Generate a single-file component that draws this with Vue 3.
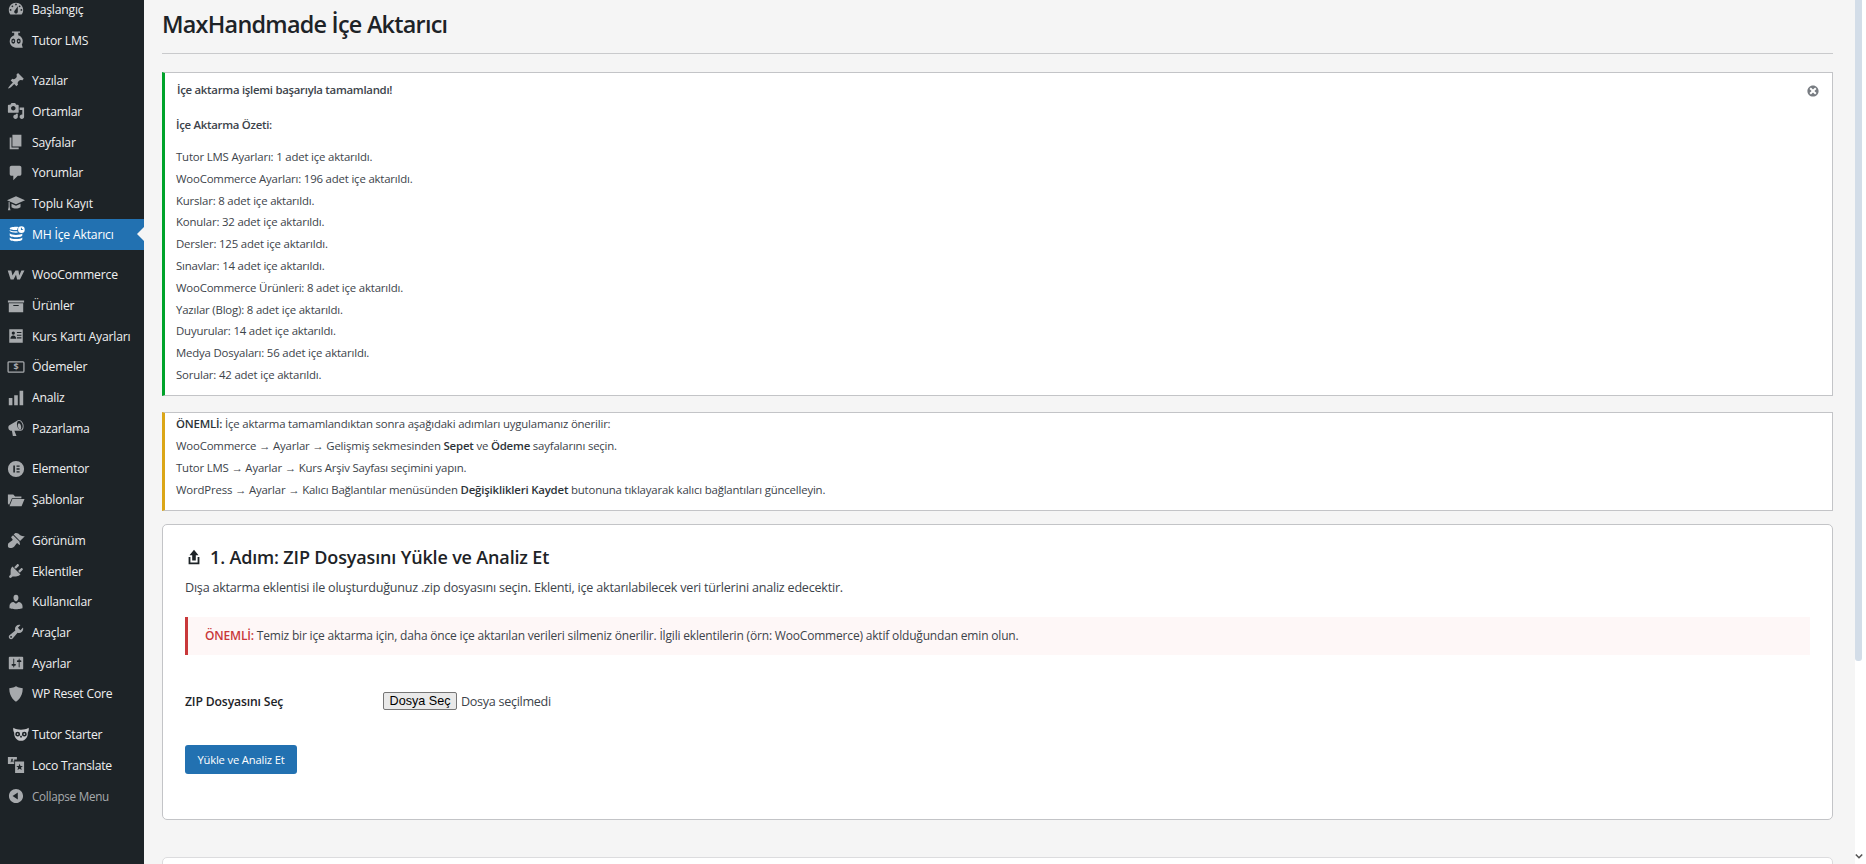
<script setup>
const menuGroups = [
  [
    { label: 'Başlangıç', icon: 'dashboard' },
    { label: 'Tutor LMS', icon: 'tutor' }
  ],
  [
    { label: 'Yazılar', icon: 'pin' },
    { label: 'Ortamlar', icon: 'media' },
    { label: 'Sayfalar', icon: 'page' },
    { label: 'Yorumlar', icon: 'comments' },
    { label: 'Toplu Kayıt', icon: 'learn' },
    { label: 'MH İçe Aktarıcı', icon: 'database', active: true }
  ],
  [
    { label: 'WooCommerce', icon: 'woo' },
    { label: 'Ürünler', icon: 'archive' },
    { label: 'Kurs Kartı Ayarları', icon: 'card' },
    { label: 'Ödemeler', icon: 'payments' },
    { label: 'Analiz', icon: 'chart' },
    { label: 'Pazarlama', icon: 'megaphone' }
  ],
  [
    { label: 'Elementor', icon: 'elementor' },
    { label: 'Şablonlar', icon: 'folder' }
  ],
  [
    { label: 'Görünüm', icon: 'brush' },
    { label: 'Eklentiler', icon: 'plugin' },
    { label: 'Kullanıcılar', icon: 'users' },
    { label: 'Araçlar', icon: 'tools' },
    { label: 'Ayarlar', icon: 'settings' },
    { label: 'WP Reset Core', icon: 'shield' }
  ],
  [
    { label: 'Tutor Starter', icon: 'owl' },
    { label: 'Loco Translate', icon: 'loco' },
    { label: 'Collapse Menu', icon: 'collapse', muted: true }
  ]
]

const icons = {
  dashboard: 'M3.76 16h12.48c1.1-1.37 1.76-3.11 1.76-5 0-4.42-3.58-8-8-8s-8 3.58-8 8c0 1.89.66 3.63 1.76 5zM10 4c.55 0 1 .45 1 1s-.45 1-1 1-1-.45-1-1 .45-1 1-1zM6 6c.55 0 1 .45 1 1s-.45 1-1 1-1-.45-1-1 .45-1 1-1zm8 0c.55 0 1 .45 1 1s-.45 1-1 1-1-.45-1-1 .45-1 1-1zm-5.37 5.55L12 7v6c0 1.1-.9 2-2 2s-2-.9-2-2c0-.57.24-1.08.63-1.45zM4 10c.55 0 1 .45 1 1s-.45 1-1 1-1-.45-1-1 .45-1 1-1zm12 0c.55 0 1 .45 1 1s-.45 1-1 1-1-.45-1-1 .45-1 1-1z',
  tutor: 'M5.500.5h9V2h-2v2.600c3 .9 5 3.400 5 6.400 0 1.500-.4 2.800-1 3.900l1 3.600H10c-3.900 0-7-3.100-7-7 0-3.200 2-5.800 5-6.700V2H5.500zM7 8.200a2.200 3 0 100 6 2.200 3 0 000-6zm6 0a2.200 3 0 100 6 2.200 3 0 000-6zM7 10.200a1 1 0 110 2 1 1 0 010-2zm6 0a1 1 0 110 2 1 1 0 010-2z',
  pin: 'M10.44 3.02l1.82-1.82 6.36 6.35-1.83 1.82c-1.05-.68-2.48-.57-3.41.36l-.75.75c-.92.93-1.04 2.35-.35 3.41l-1.83 1.82-2.41-2.41-2.8 2.79c-.42.42-3.38 2.71-3.8 2.29s1.86-3.39 2.28-3.81l2.79-2.79L4.1 9.36l1.83-1.82c1.05.69 2.48.57 3.4-.36l.75-.75c.93-.92 1.05-2.35.36-3.41z',
  media: 'M13 11V4c0-.55-.45-1-1-1h-1.67L9 1H5L3.67 3H2c-.55 0-1 .45-1 1v7c0 .55.45 1 1 1h10c.55 0 1-.45 1-1zM7 4.500c1.380 0 2.500 1.120 2.500 2.500S8.380 9.500 7 9.500 4.500 8.380 4.500 7 5.620 4.500 7 4.500zM14 6h5v10.500c0 1.380-1.120 2.500-2.500 2.500S14 17.880 14 16.500s1.120-2.500 2.500-2.500c.17 0 .34.02.5.05V9h-3V6zm-4 8.050V13h2v3.500c0 1.380-1.120 2.500-2.500 2.500S7 17.880 7 16.500 8.120 14 9.500 14c.17 0 .34.02.5.05z',
  page: 'M6 15V2h10v13H6zm-1 1h8v2H3V5h2v11z',
  comments: 'M5 2h9c1.100 0 2 .9 2 2v7c0 1.100-.9 2-2 2h-2l-5 5v-5H5c-1.100 0-2-.9-2-2V4c0-1.100.9-2 2-2z',
  learn: 'M10 2.500L0 7l10 4.500L20 7zM5 10.800v3.900c2.500 2 7.500 2 10 0v-3.900l-5 2.300zM1.800 8.700l1.200.5v5.300l.9 3.500H1l.8-3.500z',
  database: 'M10 2c1 0 2 .1 2.900.3a5 5 0 00-1.600 3.200C7.600 5.800 3 5.200 3 3.800 3 2.800 6.100 2 10 2zm-7 3.600C4 6.800 7.200 7.200 11.400 7a5 5 0 00.8 1.400c-.7.1-1.400.1-2.200.1-3 0-6.100-.5-7-1.700zM3 9.300c1 1.200 4 1.700 7 1.700 2.900 0 5.900-.5 7-1.600v1.900c0 1.400-3.100 2.200-7 2.200s-7-.8-7-2.200zM3 13.800C4 15 7 15.500 10 15.500s6-.5 7-1.700v2c0 1.400-3.100 2.200-7 2.200s-7-.8-7-2.200zM16 1.500a3.700 3.700 0 110 7.400 3.700 3.700 0 010-7.400zm-.5 1.500v2.600h2.400v-.9h-1.400V3z',
  woo: 'M.8 5h4l1.300 5.500L9.400 5h3.300l.9 5.500L16 5h3.400l-5 10h-3.200L10 9.800 7.300 15H4z',
  archive: 'M19 4v2H1V4h18zM2 7h16v10H2V7zm11 3V9H7v1h6z',
  card: 'M2.500 2.500h15v15h-15zm8.500 3v1.200h5V5.500zm0 3v1.200h5V8.500zm0 3v1.200h5v-1.200zM7 5a1.800 1.800 0 100 3.600A1.800 1.800 0 007 5zM3.800 13h6.400c0-2-1.300-3.500-3.200-3.500S3.800 11 3.800 13z',
  chart: 'M18 18V2h-4v16h4zm-6 0V7H8v11h4zm-6 0v-8H2v8h4z',
  megaphone: 'M18.150 5.940c.46 1.620.38 3.220-.02 4.480-.42 1.280-1.260 2.180-2.300 2.480-.16.06-.26.06-.4.06-.06.02-.12.02-.18.02-.06.02-.14.02-.22.02h-6.800l2.220 5.500c.02.14-.06.26-.14.34-.08.1-.24.16-.34.16H6.950c-.1 0-.26-.06-.34-.16-.08-.08-.16-.2-.14-.34l-1-5.500H4.250l-.02-.02c-.5.06-1.080-.18-1.540-.62s-.88-1.080-1.060-1.880c-.24-.8-.2-1.560-.02-2.200.18-.62.58-1.080 1.060-1.300l.02-.02 9-5.400c.1-.06.18-.1.24-.16.06-.04.14-.08.24-.12.16-.08.28-.12.5-.18 1.040-.3 2.240.1 3.220 1 .98.88 1.800 2.240 2.260 3.860zm-2.580 5.980h-.02c.4-.1.74-.34 1.040-.7.58-.7.86-1.760.86-3.040 0-.64-.1-1.300-.28-1.980-.34-1.360-1.020-2.500-1.780-3.240s-1.680-1.100-2.460-.88c-.82.22-1.400.96-1.700 2-.32 1.040-.28 2.360.06 3.720.38 1.360 1 2.500 1.800 3.240.78.74 1.620 1.100 2.480.88zm-2.540-7.080c.22-.04.42-.02.62.04.38.16.76.48 1.100 1s.62 1.200.8 1.940c.2.74.26 1.440.2 2.060-.06.6-.2 1.080-.46 1.400-.14.16-.3.3-.52.36-.22.06-.44.04-.64-.02-.36-.14-.74-.48-1.060-1-.34-.52-.62-1.200-.82-1.940-.4-1.500-.32-2.900.36-3.500.1-.12.26-.26.42-.34z',
  elementor: 'M10 1a9 9 0 100 18 9 9 0 000-18zM7 6h1.800v8H7zm3.600 0H14v1.600h-3.400zm0 3.200H14v1.600h-3.400zm0 3.200H14V14h-3.400z',
  folder: 'M1 4h6l2 2h7v2H5.500L2.300 15.500 1 14zM6 9h13.500l-3.300 8H2.800z',
  brush: 'M14.480 11.060L7.410 3.990l1.500-1.500c.5-.56 2.300-.47 3.510.32 1.210.8 1.430 1.280 2.910 2.100 1.180.64 2.450 1.260 4.450.85zm-.71.71L6.700 4.700 4.930 6.470c-.39.39-.39 1.020 0 1.410l1.060 1.060c.39.39.39 1.030 0 1.420-.6.6-1.430 1.110-2.210 1.690-.35.26-.7.53-1.010.84C1.430 13.230 1 14.490 1 16.500 1 17.550 1.450 19 3.500 19c2.010 0 3.270-.43 4.610-1.770.31-.31.58-.66.84-1.010.58-.78 1.090-1.610 1.690-2.210.39-.39 1.030-.39 1.420 0l1.060 1.060c.39.39 1.020.39 1.410 0z',
  plugin: 'M13.110 4.360L9.870 7.600 8 5.730l3.240-3.240c.35-.34 1.050-.2 1.560.32.52.51.66 1.210.31 1.550zm-8 1.770l.91-1.120 9.010 9.010-1.190.84c-.71.71-2.630 1.160-3.820 1.160H6.140L4.900 17.260c-.59.59-1.540.59-2.120 0-.59-.58-.59-1.530 0-2.120l1.240-1.240v-3.880c0-1.130.4-3.190 1.090-3.890zm7.260 3.970l3.240-3.240c.34-.35 1.040-.21 1.550.31.52.51.66 1.210.31 1.550l-3.240 3.250z',
  users: 'M10 9.250c-2.270 0-2.730-3.440-2.730-3.440C7 4.020 7.820 2 9.970 2c2.160 0 2.980 2.020 2.710 3.810 0 0-.41 3.440-2.680 3.440zm0 2.570L12.720 10c2.390 0 4.520 2.330 4.520 4.530v2.490s-3.650 1.130-7.240 1.130c-3.650 0-7.240-1.130-7.240-1.130v-2.490c0-2.250 1.940-4.480 4.470-4.480z',
  tools: 'M16.680 9.770c-1.340 1.340-3.300 1.670-4.950.99l-5.410 6.520c-.99.99-2.590.99-3.580 0s-.99-2.590 0-3.570l6.520-5.420c-.68-1.650-.35-3.610.99-4.950 1.280-1.280 3.120-1.620 4.720-1.060l-2.890 2.890 2.820 2.820 2.860-2.870c.53 1.580.18 3.390-1.080 4.650zM3.810 16.210c.4.39 1.040.39 1.430 0 .4-.4.4-1.040 0-1.430-.39-.4-1.030-.4-1.430 0-.39.39-.39 1.030 0 1.430z',
  settings: 'M18 16V4c0-.55-.45-1-1-1H3c-.55 0-1 .45-1 1v12c0 .55.45 1 1 1h14c.55 0 1-.45 1-1zM8 11h1c.55 0 1 .45 1 1s-.45 1-1 1H8v1.500c0 .28-.22.5-.5.5s-.5-.22-.5-.5V13H6c-.55 0-1-.45-1-1s.45-1 1-1h1V5.500c0-.28.22-.5.5-.5s.5.22.5.5V11zm5-2h-1c-.55 0-1-.45-1-1s.45-1 1-1h1V5.500c0-.28.22-.5.5-.5s.5.22.5.5V7h1c.55 0 1 .45 1 1s-.45 1-1 1h-1v5.500c0 .28-.22.5-.5.5s-.5-.22-.5-.5V9z',
  shield: 'M10 1.500s3.200 2 7.500 2c0 11-7.500 15-7.500 15S2.500 14.500 2.500 3.500c4.300 0 7.500-2 7.500-2z',
  owl: 'M1.500 3c2.500 1.500 5.500 2.200 8.500 2.200s6-.7 8.500-2.200c.5 2.500-.2 4.500-1 5.500.5 4.500-2.500 9-7.500 9s-8-4.500-7.500-9c-.8-1-1.500-3-1-5.500zM6.300 7.500a2.700 2.700 0 100 5.400 2.700 2.700 0 000-5.400zm7.400 0a2.700 2.700 0 100 5.400 2.700 2.700 0 000-5.400zM6.300 9.300a.9.9 0 110 1.800.9.9 0 010-1.800zm7.400 0a.9.9 0 110 1.800.9.9 0 010-1.800zM10 11.500l-1.200 1.500L10 14.500l1.200-1.500z',
  loco: 'M1 1h10v3H8v5H1zm3 6l1-4h1.300l1 4H6.600l-.2-.9H5l-.2.9zm1.200-1.800h1l-.5-1.300zM9 6h10v13H9zm5 2.500l-1 2.500-2.700.2 2.100 1.700-.7 2.600 2.300-1.400 2.300 1.400-.7-2.600 2.100-1.700L15 11z',
  collapse: 'M10 2.160c4.330 0 7.840 3.510 7.840 7.840s-3.510 7.840-7.840 7.840S2.160 14.330 2.160 10 5.710 2.160 10 2.160zm2 11.720V6.120L6.180 9.970z'
}

const dismissPath = 'M10 2c4.420 0 8 3.580 8 8s-3.580 8-8 8-8-3.580-8-8 3.580-8 8-8zm5 11l-3-3 3-3-2-2-3 3-3-3-2 2 3 3-3 3 2 2 3-3 3 3z'
const uploadPath = 'M8 14V8H5l5-6 5 6h-3v6H8zm-2 2v-6H4v8h12.010v-8H14v6H6z'

const summary = [
  'Tutor LMS Ayarları: 1 adet içe aktarıldı.',
  'WooCommerce Ayarları: 196 adet içe aktarıldı.',
  'Kurslar: 8 adet içe aktarıldı.',
  'Konular: 32 adet içe aktarıldı.',
  'Dersler: 125 adet içe aktarıldı.',
  'Sınavlar: 14 adet içe aktarıldı.',
  'WooCommerce Ürünleri: 8 adet içe aktarıldı.',
  'Yazılar (Blog): 8 adet içe aktarıldı.',
  'Duyurular: 14 adet içe aktarıldı.',
  'Medya Dosyaları: 56 adet içe aktarıldı.',
  'Sorular: 42 adet içe aktarıldı.'
]
</script>

<template>
  <div class="page">
    <!-- Sidebar -->
    <aside class="sidebar">
      <div class="menu-group" v-for="(group, i) in menuGroups" :key="i">
        <div
          class="menu-item"
          v-for="item in group"
          :key="item.label"
          :class="{ active: item.active, muted: item.muted, owl: item.icon === 'owl' }"
        >
          <svg v-if="item.icon === 'payments'" class="menu-icon" viewBox="0 0 20 20">
            <rect x="1.200" y="4.200" width="17.600" height="11.600" rx="1" fill="none" stroke="currentColor" stroke-width="1.400" />
            <text x="10" y="13.600" text-anchor="middle" font-size="10" font-weight="700" fill="currentColor">$</text>
          </svg>
          <svg v-else class="menu-icon" viewBox="0 0 20 20">
            <path :d="icons[item.icon]" fill="currentColor" fill-rule="evenodd" />
          </svg>
          <span>{{ item.label }}</span>
        </div>
      </div>
    </aside>

    <!-- Main content -->
    <main class="content">
      <h1 class="title">MaxHandmade İçe Aktarıcı</h1>
      <hr class="title-rule" />

      <div class="notice success">
        <svg class="dismiss" viewBox="0 0 20 20"><path :d="dismissPath" fill="currentColor" fill-rule="evenodd" /></svg>
        <p class="success-title">İçe aktarma işlemi başarıyla tamamlandı!</p>
        <p class="summary-title">İçe Aktarma Özeti:</p>
        <p class="summary-line" v-for="line in summary" :key="line">{{ line }}</p>
      </div>

      <div class="notice warning">
        <p><strong>ÖNEMLİ:</strong> İçe aktarma tamamlandıktan sonra aşağıdaki adımları uygulamanız önerilir:</p>
        <p>WooCommerce → Ayarlar → Gelişmiş sekmesinden <strong>Sepet</strong> ve <strong>Ödeme</strong> sayfalarını seçin.</p>
        <p>Tutor LMS → Ayarlar → Kurs Arşiv Sayfası seçimini yapın.</p>
        <p>WordPress → Ayarlar → Kalıcı Bağlantılar menüsünden <strong>Değişiklikleri Kaydet</strong> butonuna tıklayarak kalıcı bağlantıları güncelleyin.</p>
      </div>

      <section class="card">
        <h2 class="card-title">
          <svg class="upload-icon" viewBox="0 0 20 20"><path :d="uploadPath" fill="currentColor" fill-rule="evenodd" /></svg>
          1. Adım: ZIP Dosyasını Yükle ve Analiz Et
        </h2>
        <p class="card-text">Dışa aktarma eklentisi ile oluşturduğunuz .zip dosyasını seçin. Eklenti, içe aktarılabilecek veri türlerini analiz edecektir.</p>
        <div class="alert">
          <strong>ÖNEMLİ:</strong> Temiz bir içe aktarma için, daha önce içe aktarılan verileri silmeniz önerilir. İlgili eklentilerin (örn: WooCommerce) aktif olduğundan emin olun.
        </div>
        <div class="file-row">
          <span class="file-label">ZIP Dosyasını Seç</span>
          <button class="file-button" type="button">Dosya Seç</button>
          <span class="file-name">Dosya seçilmedi</span>
        </div>
        <button class="primary-button" type="button">Yükle ve Analiz Et</button>
      </section>

      <section class="card next-card"></section>
    </main>

    <!-- Scrollbar -->
    <div class="scrollbar">
      <div class="scroll-thumb"></div>
      <svg class="scroll-arrow" viewBox="0 0 10 8"><path d="M1 1.500l4 4 4-4" fill="none" stroke="#555" stroke-width="2" /></svg>
    </div>
  </div>
</template>

<style>
html, body {
  margin: 0;
  height: 864px;
  overflow: hidden;
}
</style>

<style scoped>
.page {
  display: flex;
  height: 864px;
  overflow: hidden;
  background: #f5f5f5;
  font-family: "Open Sans", "Liberation Sans", sans-serif;
  color: #3c434a;
}

.sidebar {
  width: 144px;
  flex: none;
  background: #1d2327;
  box-sizing: border-box;
  margin-top: -6px;
  height: 870px;
}

.menu-group {
  margin-bottom: 10px;
}

.menu-item {
  position: relative;
  display: flex;
  align-items: center;
  height: 30.7px;
  padding-left: 7px;
  color: #f0f0f1;
  font-size: 12.2px;
  letter-spacing: -0.2px;
  white-space: nowrap;
}

.menu-item.active {
  background: #2271b1;
  color: #fff;
}

.menu-item.active::after {
  content: "";
  position: absolute;
  right: 0;
  top: 50%;
  margin-top: -7px;
  border: 7px solid transparent;
  border-right-color: #f5f5f5;
  border-left: none;
}

.menu-item.muted {
  color: #a7aaad;
  font-size: 11.7px;
  letter-spacing: -0.27px;
}

.menu-icon {
  width: 18px;
  height: 18px;
  flex: none;
  margin-right: 7px;
  color: #a7aaad;
}

.menu-item.active .menu-icon {
  color: #fff;
}

.menu-item.owl .menu-icon {
  margin-left: 5px;
  margin-right: 2px;
  color: #c3c4c7;
}

.content {
  flex: 1;
  min-width: 0;
  padding: 0 22px 0 18px;
}

.title {
  margin: 0;
  padding-top: 8px;
  height: 53px;
  box-sizing: border-box;
  font-size: 23.4px;
  line-height: 32px;
  font-weight: 600;
  color: #1d2327;
  letter-spacing: -0.75px;
}

.title-rule {
  margin: 0 0 18px;
  border: none;
  border-top: 1px solid #c9cacc;
}

.notice {
  background: #fff;
  border: 1px solid #c3c4c7;
  border-left-width: 3px;
  box-sizing: border-box;
  position: relative;
  font-size: 11.4px;
  letter-spacing: -0.18px;
}

.notice p {
  margin: 0;
}

.success {
  border-left-color: #00a32a;
  height: 324px;
  margin-bottom: 16px;
  padding: 8px 11px;
}

.dismiss {
  position: absolute;
  right: 12px;
  top: 11px;
  width: 14px;
  height: 14px;
  color: #787c82;
}

.notice .success-title {
  font-weight: 600;
  line-height: 18px;
  margin-left: 1px;
  letter-spacing: -0.28px;
}

.notice .summary-title {
  font-weight: 600;
  line-height: 18px;
  margin: 17px 0 12px;
  letter-spacing: -0.28px;
}

.notice .summary-line {
  line-height: 21.8px;
}

.warning {
  border-left-color: #dba617;
  height: 99px;
  margin-bottom: 13px;
  padding: 0 11px;
}

.warning p {
  line-height: 22px;
}

.warning strong {
  font-weight: 600;
  color: #2c3338;
}

.card {
  background: #fff;
  border: 1px solid #c3c4c7;
  border-radius: 5px;
  box-sizing: border-box;
  height: 296px;
  padding: 19px 22px 0;
  margin-bottom: 37px;
}

.next-card {
  height: 60px;
  border-color: #dcdcde;
}

.card-title {
  display: flex;
  align-items: center;
  gap: 7px;
  margin: 0 0 8px;
  font-size: 18px;
  line-height: 26px;
  font-weight: 600;
  color: #1d2327;
  letter-spacing: -0.16px;
}

.upload-icon {
  width: 18px;
  height: 18px;
}

.card-text {
  margin: 0 0 19px;
  font-size: 12.6px;
  line-height: 20px;
  letter-spacing: -0.23px;
}

.alert {
  background: #fef7f7;
  border-left: 3px solid #c9383a;
  height: 38px;
  line-height: 38px;
  padding-left: 17px;
  font-size: 12px;
  letter-spacing: -0.18px;
  margin-bottom: 36px;
  box-sizing: border-box;
}

.alert strong {
  color: #c9383a;
  font-weight: 600;
}

.file-row {
  display: flex;
  align-items: center;
  height: 20px;
  margin-bottom: 34px;
}

.file-label {
  width: 198px;
  font-size: 12.2px;
  font-weight: 600;
  color: #1d2327;
  letter-spacing: -0.15px;
}

.file-button {
  width: 74px;
  height: 18px;
  padding: 0;
  background: #e9e9e9;
  border: 1px solid #767676;
  border-radius: 2px;
  color: #000;
  font-family: "Liberation Sans", Arial, sans-serif;
  font-size: 12.6px;
  line-height: 16px;
}

.file-name {
  margin-left: 4px;
  font-size: 12.6px;
  letter-spacing: -0.3px;
}

.primary-button {
  display: block;
  width: 112px;
  height: 29px;
  padding: 0;
  background: #2271b1;
  border: none;
  border-radius: 3px;
  color: #fff;
  font-family: inherit;
  font-size: 11.2px;
  letter-spacing: -0.15px;
}

.scrollbar {
  position: relative;
  width: 11px;
  flex: none;
  background: #fff;
}

.scroll-thumb {
  width: 7px;
  height: 661px;
  background: #d3dde8;
  border-radius: 0 0 3px 3px;
}

.scroll-arrow {
  position: absolute;
  left: 0;
  top: 853px;
  width: 8px;
  height: 7px;
}
</style>
